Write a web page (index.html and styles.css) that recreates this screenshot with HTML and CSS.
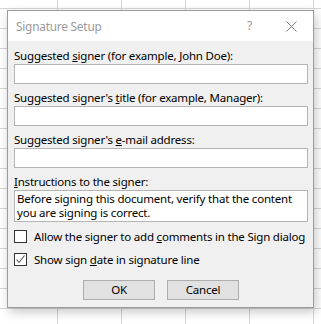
FILE: index.html
```html
<!DOCTYPE html>
<html>
<head>
<meta charset="utf-8">
<link rel="stylesheet" href="styles.css">
</head>
<body>
<div class="dialog">
  <div class="titlebar">
    <span class="title">Signature Setup</span>
    <span class="help">?</span>
    <svg class="close" width="11" height="11" viewBox="0 0 11 11"><path d="M0.5 0.5L10.5 10.5M10.5 0.5L0.5 10.5" stroke="#7a7a7a" stroke-width="1" fill="none"/></svg>
  </div>
  <div class="content">
    <div class="field">
      <div class="label">Suggested <u>s</u>igner (for example, John Doe):</div>
      <div class="input"></div>
    </div>
    <div class="field">
      <div class="label">Suggested signer's <u>t</u>itle (for example, Manager):</div>
      <div class="input"></div>
    </div>
    <div class="field">
      <div class="label">Suggested signer's <u>e</u>-mail address:</div>
      <div class="input"></div>
    </div>
    <div class="field">
      <div class="label"><u>I</u>nstructions to the signer:</div>
      <div class="textarea">Before signing this document, verify that the content you are signing is correct.</div>
    </div>
    <div class="check-row">
      <span class="box"></span>
      <span class="check-label">Allow the signer to add <u>c</u>omments in the Sign dialog</span>
    </div>
    <div class="check-row">
      <span class="box"><svg width="11" height="11" viewBox="0 0 11 11"><path d="M1.5 5.5L4 8.5L9.5 1.5" stroke="#555" stroke-width="1.1" fill="none"/></svg></span>
      <span class="check-label">Show sign <u>d</u>ate in signature line</span>
    </div>
    <div class="buttons">
      <div class="btn">OK</div>
      <div class="btn">Cancel</div>
    </div>
  </div>
</div>
</body>
</html>
```
FILE: styles.css
```css
html, body {
  margin: 0;
  padding: 0;
}
body {
  width: 321px;
  height: 324px;
  overflow: hidden;
  background-color: #ffffff;
  background-image:
    linear-gradient(to right, #d6d6d6 1px, transparent 1px),
    linear-gradient(to bottom, #d6d6d6 1px, transparent 1px);
  background-size: 64px 20px;
  background-position: 57px 8px;
  font-family: "Noto Sans", "Open Sans", sans-serif;
  font-size: 11.5px;
  letter-spacing: -0.2px;
  color: #000;
}
.dialog {
  margin: 10px 0 0 7px;
  width: 305px;
  height: 296px;
  border: 1px solid #9c9c9c;
  background: #f0f0f0;
  box-shadow: 2px 4px 10px rgba(0, 0, 0, 0.22);
  display: flex;
  flex-direction: column;
}
.titlebar {
  height: 30px;
  background: #fff;
  display: flex;
  align-items: center;
  padding-left: 8px;
  padding-right: 16px;
}
.title {
  color: #9a9a9a;
  flex: 1;
  font-size: 11.8px;
  margin-top: -1px;
}
.help {
  color: #9a9a9a;
  font-size: 12px;
  margin-right: 34px;
  margin-top: -1px;
}
.close {
  display: block;
}
.content {
  padding: 7px 5px 0 6px;
  display: flex;
  flex-direction: column;
}
.field {
  display: flex;
  flex-direction: column;
  margin-bottom: 6px;
}
.label {
  height: 15px;
  line-height: 15px;
  margin-bottom: 1px;
  white-space: nowrap;
}
.input {
  height: 18px;
  border: 1px solid #b4b4b4;
  background: #fff;
}
.textarea {
  height: 28px;
  border: 1px solid #b4b4b4;
  background: #fff;
  padding: 1px 2px;
  line-height: 13.5px;
}
.check-row {
  display: flex;
  align-items: center;
  height: 13px;
  margin-top: 2px;
  margin-bottom: 8px;
}
.check-row + .check-row {
  margin-top: 2px;
}
.box {
  width: 11px;
  height: 11px;
  border: 1px solid #333;
  background: #fff;
  display: flex;
  align-items: center;
  justify-content: center;
  flex: none;
}
.check-label {
  margin-left: 7px;
  white-space: nowrap;
}
.buttons {
  display: flex;
  justify-content: center;
  gap: 12px;
  margin-top: 6px;
}
.btn {
  width: 70px;
  height: 18px;
  line-height: 18px;
  border: 1px solid #adadad;
  background: #e1e1e1;
  text-align: center;
}
```
